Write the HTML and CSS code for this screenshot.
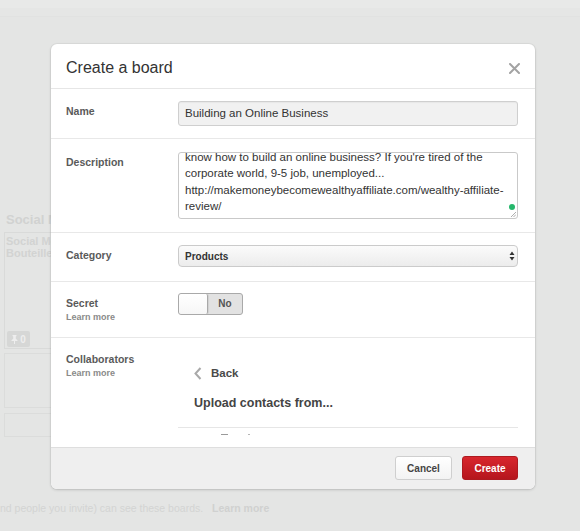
FILE: index.html
```html
<!DOCTYPE html>
<html lang="en">
<head>
<meta charset="utf-8">
<title>Create a board</title>
<link rel="stylesheet" href="styles.css">
</head>
<body>
<div class="page">
  <div class="topbar"></div>
  <div class="boards">
    <div class="board-title">Social Media</div>
    <div class="board-card">
      <div class="card-text">Social Media<br>Bouteiller</div>
      <div class="pin-badge">
        <svg width="7" height="9" viewBox="0 0 7 9"><path d="M1.5 0h4v1l-0.7 0.6v2.2L6.5 5.3v0.7H4v3H3V6H0.5V5.3l1.7-1.5V1.6L1.5 1z" fill="#eeeeee"/></svg>
        <span>0</span>
      </div>
    </div>
    <div class="box box-mid"></div>
    <div class="box box-low"></div>
  </div>
  <div class="notice">nd people you invite) can see these boards. <span class="notice-link">Learn more</span></div>
</div>

<div class="modal">
  <div class="modal-header">
    <h1 class="modal-title">Create a board</h1>
    <svg class="close" width="11" height="11" viewBox="0 0 11 11"><path d="M1 1L10 10M10 1L1 10" stroke="#a3a3a3" stroke-width="2" stroke-linecap="round"/></svg>
  </div>
  <div class="modal-body">
    <div class="row row-name">
      <div class="label">Name</div>
      <div class="control">
        <div class="input">Building an Online Business</div>
      </div>
    </div>
    <div class="row row-desc">
      <div class="label">Description</div>
      <div class="control">
        <div class="textarea">
          <div class="textarea-text">know how to build an online business? If you're tired of the<br>corporate world, 9-5 job, unemployed...<br>http://makemoneybecomewealthyaffiliate.com/wealthy-affiliate-<br>review/</div>
          <span class="status-dot"></span>
          <svg class="grip" width="6" height="6" viewBox="0 0 6 6"><path d="M1 6L6 1M3.5 6L6 3.5" stroke="#9a9a9a" stroke-width="0.8"/></svg>
        </div>
      </div>
    </div>
    <div class="row row-cat">
      <div class="label">Category</div>
      <div class="control">
        <div class="select">
          <span>Products</span>
          <svg width="6" height="10" viewBox="0 0 6 10"><path d="M3 0.5L5.5 4H0.5z M3 9.5L0.5 6H5.5z" fill="#333"/></svg>
        </div>
      </div>
    </div>
    <div class="row row-secret">
      <div class="label">Secret<div class="learn">Learn more</div></div>
      <div class="control">
        <div class="toggle">
          <span class="knob"></span>
          <span class="toggle-text">No</span>
        </div>
      </div>
    </div>
    <div class="row row-collab">
      <div class="label">Collaborators<div class="learn">Learn more</div></div>
      <div class="control collab">
        <div class="back">
          <svg width="8" height="13" viewBox="0 0 8 13"><path d="M6.5 1L1.5 6.5L6.5 12" fill="none" stroke="#a9a9a9" stroke-width="2"/></svg>
          <span>Back</span>
        </div>
        <div class="upload">Upload contacts from...</div>
        <div class="divider"></div>
        <div class="partial"><span class="p1"></span><span class="p2"></span></div>
      </div>
    </div>
  </div>
  <div class="modal-footer">
    <button class="btn btn-cancel">Cancel</button>
    <button class="btn btn-create">Create</button>
  </div>
</div>
</body>
</html>
```
FILE: styles.css
```css
* { box-sizing: border-box; }
html, body {
  margin: 0;
  padding: 0;
}
body {
  width: 580px;
  height: 531px;
  overflow: hidden;
  background: #e4e5e4;
  font-family: "Liberation Sans", Arial, sans-serif;
  position: relative;
}

/* background page */
.page {
  height: 531px;
  display: flex;
  flex-direction: column;
}
.topbar {
  height: 17px;
  background: linear-gradient(#e8e9e8 0, #e8e9e8 8px, #e5e6e5 8px);
  border-bottom: 1px solid #e1e2e1;
}
.boards {
  padding: 195px 0 0 4px;
  width: 220px;
}
.board-title {
  font-weight: bold;
  font-size: 13px;
  line-height: 16px;
  color: #d1d2d1;
  padding-left: 2px;
}
.board-card {
  margin-top: 4px;
  height: 117px;
  border: 1px solid #d9dad9;
  padding: 2px 0 0 1px;
  position: relative;
  display: flex;
  flex-direction: column;
  justify-content: space-between;
}
.card-text {
  font-weight: bold;
  font-size: 11px;
  line-height: 12px;
  color: #d2d3d2;
}
.pin-badge {
  width: 23px;
  height: 16px;
  margin: 0 0 1px 1px;
  background: #d6d7d6;
  border-radius: 2px;
  display: flex;
  align-items: center;
  justify-content: center;
  gap: 2px;
  font-size: 10px;
  color: #eeeeee;
  font-weight: bold;
}
.box {
  border: 1px solid #dbdcdb;
  margin-top: 4px;
}
.box-mid { height: 55px; }
.box-low { height: 24px; margin-top: 5px; }
.notice {
  margin-top: 64px;
  margin-left: 0;
  font-size: 10.5px;
  line-height: 14px;
  color: #d3d4d3;
  white-space: nowrap;
}
.notice-link {
  font-weight: bold;
  margin-left: 6px;
  color: #d0d1d0;
}

/* modal */
.modal {
  position: absolute;
  left: 51px;
  top: 44px;
  width: 484px;
  height: 445px;
  background: #fff;
  border-radius: 6px;
  box-shadow: 0 1px 3px rgba(0, 0, 0, 0.16), 0 0 0 1px rgba(0, 0, 0, 0.03);
  display: flex;
  flex-direction: column;
  overflow: hidden;
}
.modal-header {
  height: 45px;
  flex: none;
  border-bottom: 1px solid #e6e6e6;
  display: flex;
  justify-content: space-between;
  align-items: flex-start;
  padding: 14px 15px 0 15px;
}
.modal-title {
  margin: 0;
  font-size: 16px;
  line-height: 20px;
  font-weight: normal;
  color: #333;
}
.close { margin-top: 5px; }

.modal-body {
  flex: 1;
  overflow: hidden;
}
.row {
  display: grid;
  grid-template-columns: 112px 340px;
  padding-left: 15px;
  padding-right: 17px;
  border-bottom: 1px solid #e8e8e8;
}
.row-name { height: 50px; padding-top: 12px; }
.row-desc { height: 94px; padding-top: 13px; }
.row-cat { height: 49px; padding-top: 12px; }
.row-secret { height: 56px; padding-top: 11px; }
.row-collab { padding-top: 11px; border-bottom: none; height: 120px; }

.label {
  margin-top: 3px;
  font-size: 10.5px;
  line-height: 14px;
  font-weight: bold;
  color: #5a5a5a;
}
.learn {
  font-size: 9px;
  line-height: 14px;
  color: #8a8a8a;
}

.input {
  height: 25px;
  border: 1px solid #cfcfcf;
  border-radius: 3px;
  background: #f1f1f1;
  box-shadow: inset 0 1px 1px rgba(0, 0, 0, 0.04);
  padding: 0 6px;
  font-size: 11.5px;
  line-height: 23px;
  color: #333;
}

.textarea {
  position: relative;
  height: 67px;
  border: 1px solid #c9c9c9;
  border-radius: 3px;
  background: #fff;
  overflow: hidden;
  padding: 0 6px;
}
.textarea-text {
  margin-top: -4px;
  font-size: 11.5px;
  line-height: 16.3px;
  color: #333;
  white-space: nowrap;
}
.status-dot {
  position: absolute;
  right: 2px;
  top: 51px;
  width: 6px;
  height: 6px;
  border-radius: 50%;
  background: #25b76b;
}
.grip {
  position: absolute;
  right: 1px;
  bottom: 1px;
}

.select {
  height: 22px;
  border: 1px solid #cbcbcb;
  border-radius: 4px;
  background: linear-gradient(#fbfbfb, #ececec);
  display: flex;
  align-items: center;
  justify-content: space-between;
  padding: 0 2px 0 6px;
  font-size: 10px;
  font-weight: bold;
  color: #333;
}

.toggle {
  width: 65px;
  height: 22px;
  border: 1px solid #a9a9a9;
  border-radius: 3px;
  background: #e2e2e2;
  display: flex;
  overflow: hidden;
}
.knob {
  width: 29px;
  background: linear-gradient(#ffffff, #f6f6f6);
  border-right: 1px solid #a9a9a9;
  border-radius: 2px;
  box-shadow: 1px 0 1px rgba(0, 0, 0, 0.08);
}
.toggle-text {
  flex: 1;
  text-align: center;
  font-size: 10px;
  font-weight: bold;
  line-height: 20px;
  color: #555;
}

.collab {
  display: flex;
  flex-direction: column;
}
.back {
  margin-top: 14px;
  padding-left: 16px;
  height: 20px;
  display: flex;
  align-items: center;
  gap: 9px;
  font-size: 11.5px;
  font-weight: bold;
  color: #4a4a4a;
}
.upload {
  margin-top: 11px;
  padding-left: 16px;
  font-size: 12.5px;
  line-height: 18px;
  font-weight: bold;
  color: #444;
}
.divider {
  margin-top: 15px;
  height: 1px;
  background: #e6e6e6;
}
.partial {
  margin-top: 5px;
  padding-left: 43px;
  display: flex;
  align-items: center;
  height: 2px;
}
.p1 { width: 7px; height: 1px; background: #9a9a9a; }
.p2 { width: 2px; height: 1px; background: #b5b5b5; margin-left: 20px; }

.modal-footer {
  height: 42px;
  flex: none;
  background: #efefef;
  border-top: 1px solid #dedede;
  display: flex;
  justify-content: flex-end;
  align-items: flex-start;
  gap: 10px;
  padding: 8px 17px 0 0;
}
.btn {
  height: 24px;
  border-radius: 3px;
  font-family: "Liberation Sans", Arial, sans-serif;
  font-size: 10px;
  font-weight: bold;
  padding: 0;
  cursor: pointer;
}
.btn-cancel {
  width: 57px;
  border: 1px solid #cfcfcf;
  background: linear-gradient(#ffffff, #f3f3f3);
  color: #444;
}
.btn-create {
  width: 56px;
  border: 1px solid #ad1a20;
  background: linear-gradient(#d8262d, #b5161d);
  color: #fff;
}
```
